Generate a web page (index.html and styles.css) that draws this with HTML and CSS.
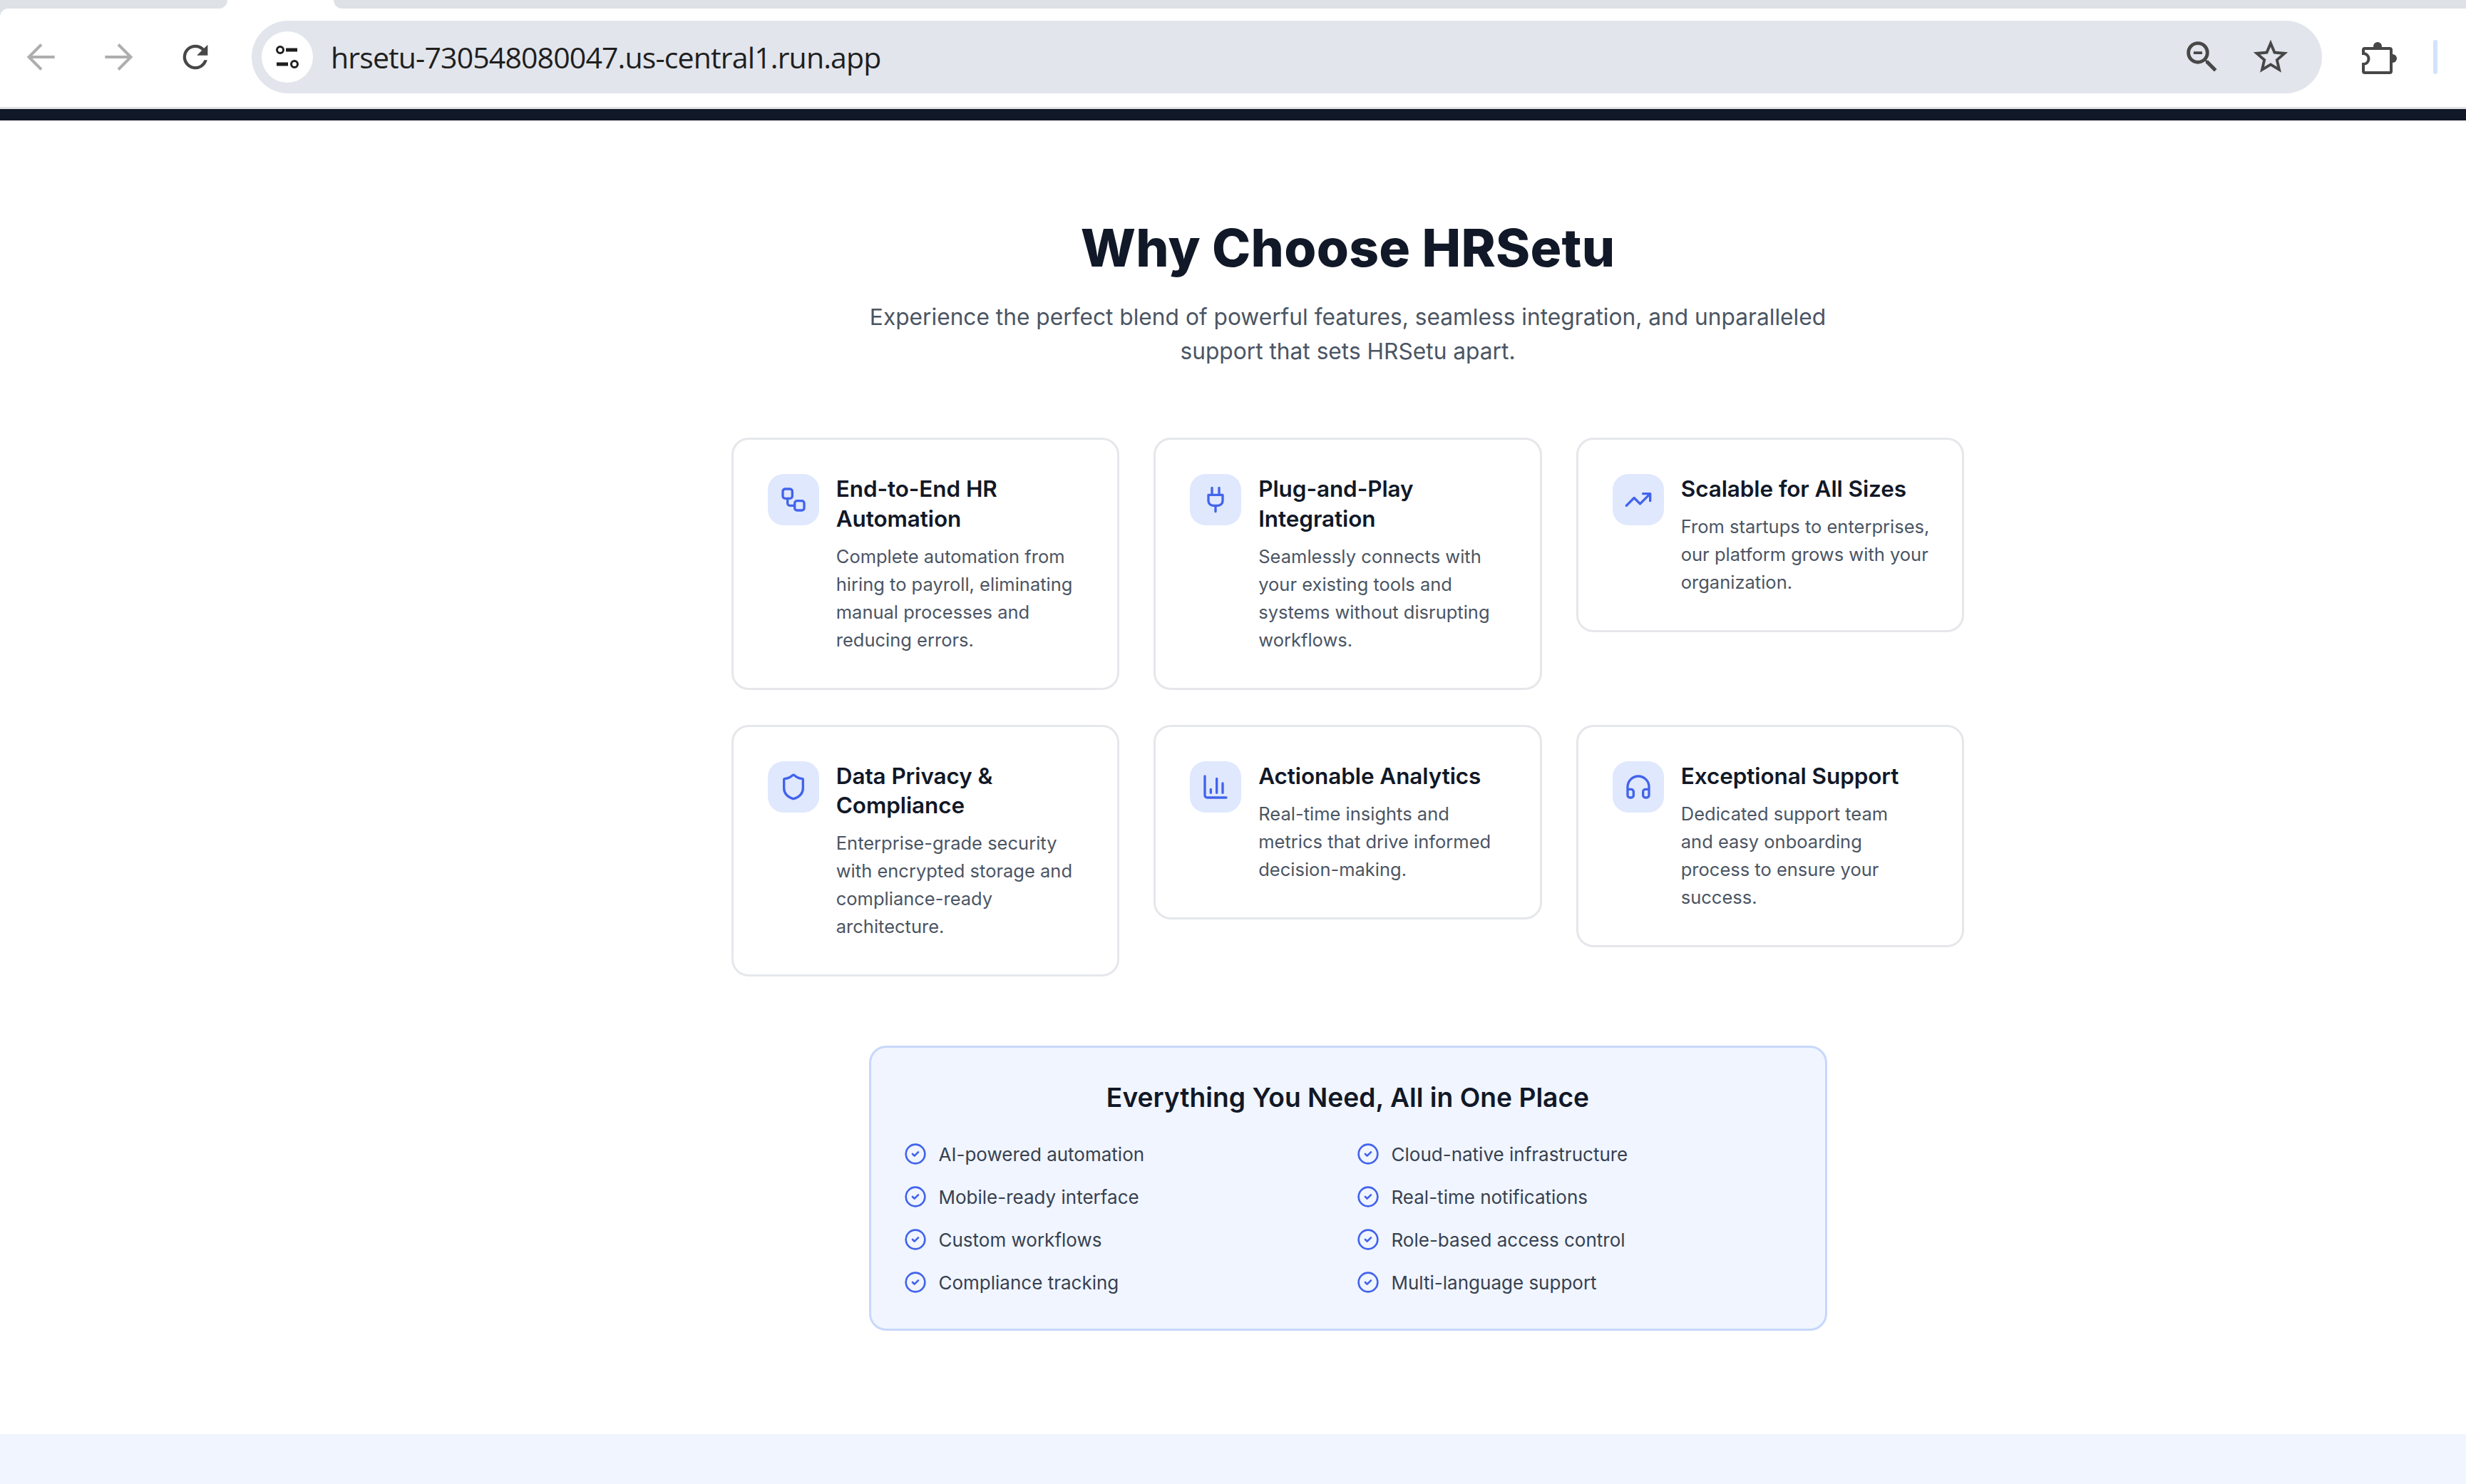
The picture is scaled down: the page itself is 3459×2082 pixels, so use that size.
FILE: index.html
```html
<!DOCTYPE html>
<html lang="en">
<head>
  <meta charset="UTF-8" />
  <meta name="viewport" content="width=device-width, initial-scale=1.0"/>
  <title>Why Choose HRSetu</title>
  <link rel="stylesheet" href="styles.css">
</head>
<body>

<!-- Browser chrome -->
<div class="tabs">
  <div class="tab-off"></div>
  <div class="tab-active"></div>
  <div class="tab-rest"></div>
</div>
<div class="toolbar">
  <svg class="nav-icon arrow" width="56" height="56" viewBox="0 0 24 24"><path d="M20 12H5M12 4.5 4.5 12l7.5 7.5"/></svg>
  <svg class="nav-icon arrow" width="56" height="56" viewBox="0 0 24 24"><path d="M4 12h15M12 4.5l7.5 7.5-7.5 7.5"/></svg>
  <svg class="nav-icon reload" width="52" height="52" viewBox="0 0 24 24"><path class="solid" d="M17.65 6.35A7.95 7.95 0 0 0 12 4a8 8 0 1 0 7.75 10h-2.08A6 6 0 1 1 12 6c1.66 0 3.14.69 4.22 1.78L13 11h7V4z"/></svg>
  <div class="omnibox">
    <div class="site-info">
      <svg width="40" height="40" viewBox="0 0 40 40"><circle class="ring" cx="10" cy="10" r="4.5"/><path class="bar" d="M18 10h16M5 30h16"/><circle class="ring" cx="30" cy="30" r="4.5"/></svg>
    </div>
    <div class="url">hrsetu-730548080047.us-central1.run.app</div>
    <div class="omni-actions">
      <svg width="58" height="58" viewBox="0 0 24 24"><path class="solid" d="M15.5 14h-.79l-.28-.27A6.471 6.471 0 0 0 16 9.5 6.5 6.5 0 1 0 9.5 16c1.61 0 3.09-.59 4.23-1.57l.27.28v.79l5 4.99L20.49 19l-4.99-5zm-6 0C7.01 14 5 11.99 5 9.5S7.01 5 9.5 5 14 7.01 14 9.5 11.99 14 9.5 14zM7 8.8h5v1.5H7z"/></svg>
      <svg width="58" height="58" viewBox="0 0 24 24"><path class="solid" d="M22 9.24l-7.19-.62L12 2 9.19 8.63 2 9.24l5.46 4.73L5.82 21 12 17.27 18.18 21l-1.63-7.03L22 9.24zM12 15.4l-3.76 2.27 1-4.28-3.32-2.88 4.38-.38L12 6.1l1.71 4.04 4.38.38-3.32 2.88 1 4.28L12 15.4z"/></svg>
    </div>
  </div>
  <svg class="puzzle" width="49" height="48" viewBox="0 0 49 48"><circle class="solid" cx="22" cy="9" r="6"/><circle class="solid" cx="43" cy="26" r="6"/><path class="puzzle-body" d="M4 12h35a2 2 0 0 1 2 2v30a2 2 0 0 1-2 2H4a2 2 0 0 1-2-2V34a7.5 7.5 0 0 0 0-15v-5a2 2 0 0 1 2-2z"/></svg>
  <div class="profile-bar"></div>
</div>
<div class="site-nav"></div>

<!-- Why choose section -->
<main class="why">
  <h1>Why Choose HRSetu</h1>
  <p class="lead">Experience the perfect blend of powerful features, seamless integration, and unparalleled<br>support that sets HRSetu apart.</p>

  <div class="feature-grid">
    <div class="card">
      <div class="card-icon"><svg width="40" height="40" viewBox="0 0 24 24"><rect x="3" y="3" width="8" height="8" rx="2"/><path d="M7 11v4a2 2 0 0 0 2 2h4"/><rect x="13" y="13" width="8" height="8" rx="2"/></svg></div>
      <div class="card-text">
        <h3>End-to-End HR<br>Automation</h3>
        <p>Complete automation from<br>hiring to payroll, eliminating<br>manual processes and<br>reducing errors.</p>
      </div>
    </div>
    <div class="card">
      <div class="card-icon"><svg width="40" height="40" viewBox="0 0 24 24"><path d="M12 22v-5M9 8V2M15 8V2M18 8v5a4 4 0 0 1-4 4h-4a4 4 0 0 1-4-4V8Z"/></svg></div>
      <div class="card-text">
        <h3>Plug-and-Play<br>Integration</h3>
        <p>Seamlessly connects with<br>your existing tools and<br>systems without disrupting<br>workflows.</p>
      </div>
    </div>
    <div class="card">
      <div class="card-icon"><svg width="40" height="40" viewBox="0 0 24 24"><path d="M22 7l-8.5 8.5-5-5L2 17M16 7h6v6"/></svg></div>
      <div class="card-text">
        <h3>Scalable for All Sizes</h3>
        <p>From startups to enterprises,<br>our platform grows with your<br>organization.</p>
      </div>
    </div>
    <div class="card">
      <div class="card-icon"><svg width="40" height="40" viewBox="0 0 24 24"><path d="M20 13c0 5-3.5 7.5-7.66 8.95a1 1 0 0 1-.67-.01C7.5 20.5 4 18 4 13V6a1 1 0 0 1 1-1c2 0 4.5-1.2 6.24-2.72a1.17 1.17 0 0 1 1.52 0C14.51 3.81 17 5 19 5a1 1 0 0 1 1 1z"/></svg></div>
      <div class="card-text">
        <h3>Data Privacy &amp;<br>Compliance</h3>
        <p>Enterprise-grade security<br>with encrypted storage and<br>compliance-ready<br>architecture.</p>
      </div>
    </div>
    <div class="card">
      <div class="card-icon"><svg width="40" height="40" viewBox="0 0 24 24"><path d="M3 3v16a2 2 0 0 0 2 2h16M18 17V9M13 17V5M8 17v-3"/></svg></div>
      <div class="card-text">
        <h3>Actionable Analytics</h3>
        <p>Real-time insights and<br>metrics that drive informed<br>decision-making.</p>
      </div>
    </div>
    <div class="card">
      <div class="card-icon"><svg width="40" height="40" viewBox="0 0 24 24"><path d="M3 14h3a2 2 0 0 1 2 2v3a2 2 0 0 1-2 2H5a2 2 0 0 1-2-2v-7a9 9 0 0 1 18 0v7a2 2 0 0 1-2 2h-1a2 2 0 0 1-2-2v-3a2 2 0 0 1 2-2h3"/></svg></div>
      <div class="card-text">
        <h3>Exceptional Support</h3>
        <p>Dedicated support team<br>and easy onboarding<br>process to ensure your<br>success.</p>
      </div>
    </div>
  </div>

  <div class="everything">
    <h2>Everything You Need, All in One Place</h2>
    <ul class="check-list">
      <li><svg width="32" height="32" viewBox="0 0 24 24"><circle cx="12" cy="12" r="10"/><path d="m9 12 2 2 4-4"/></svg>AI-powered automation</li>
      <li><svg width="32" height="32" viewBox="0 0 24 24"><circle cx="12" cy="12" r="10"/><path d="m9 12 2 2 4-4"/></svg>Cloud-native infrastructure</li>
      <li><svg width="32" height="32" viewBox="0 0 24 24"><circle cx="12" cy="12" r="10"/><path d="m9 12 2 2 4-4"/></svg>Mobile-ready interface</li>
      <li><svg width="32" height="32" viewBox="0 0 24 24"><circle cx="12" cy="12" r="10"/><path d="m9 12 2 2 4-4"/></svg>Real-time notifications</li>
      <li><svg width="32" height="32" viewBox="0 0 24 24"><circle cx="12" cy="12" r="10"/><path d="m9 12 2 2 4-4"/></svg>Custom workflows</li>
      <li><svg width="32" height="32" viewBox="0 0 24 24"><circle cx="12" cy="12" r="10"/><path d="m9 12 2 2 4-4"/></svg>Role-based access control</li>
      <li><svg width="32" height="32" viewBox="0 0 24 24"><circle cx="12" cy="12" r="10"/><path d="m9 12 2 2 4-4"/></svg>Compliance tracking</li>
      <li><svg width="32" height="32" viewBox="0 0 24 24"><circle cx="12" cy="12" r="10"/><path d="m9 12 2 2 4-4"/></svg>Multi-language support</li>
    </ul>
  </div>
</main>

<div class="next-section"></div>

</body>
</html>
```

FILE: styles.css
```css
* {
  box-sizing: border-box;
}

body {
  margin: 0;
  height: 2082px;
  overflow: hidden;
  background: white;
  font-family: Inter, "Liberation Sans", sans-serif;
  color: #111827;
}

/* Browser chrome */
.tabs {
  display: flex;
  height: 12px;
  background: white;
}

.tab-off {
  width: 319px;
  background: #dee1e6;
  border-bottom-right-radius: 14px;
}

.tab-active {
  width: 149px;
}

.tab-rest {
  flex: 1;
  background: #dee1e6;
  border-bottom-left-radius: 14px;
}

.toolbar {
  position: relative;
  display: flex;
  align-items: center;
  height: 141px;
  padding: 0 40px 3px 30px;
  background: white;
  border-bottom: 3px solid #e1e3e6;
}

.toolbar::before {
  content: "";
  position: absolute;
  left: 0;
  top: 0;
  width: 12px;
  height: 12px;
  background: radial-gradient(circle at 100% 100%, white 11.5px, #dee1e6 12.5px);
}

.nav-icon {
  flex: none;
  margin-right: 52px;
}

.nav-icon.reload {
  margin: 0 53px 0 2px;
}

.nav-icon path {
  fill: none;
  stroke: #474747;
  stroke-width: 1.7;
}

.nav-icon.arrow path {
  stroke: #aeaeae;
}

.nav-icon path.solid,
.omni-actions .solid,
.puzzle .solid {
  fill: #474747;
  stroke: none;
}

.omnibox {
  flex: 1;
  display: flex;
  align-items: center;
  height: 102px;
  padding: 0 43px 0 14px;
  background: #e2e5ec;
  border-radius: 51px;
}

.site-info {
  display: flex;
  align-items: center;
  justify-content: center;
  width: 72px;
  height: 72px;
  margin-right: 25px;
  background: white;
  border-radius: 50%;
}

.site-info .ring {
  fill: none;
  stroke: #1f1f1f;
  stroke-width: 3;
}

.site-info .bar {
  fill: none;
  stroke: #1f1f1f;
  stroke-width: 5;
}

.url {
  flex: 1;
  font-family: "Open Sans", sans-serif;
  font-size: 41px;
  letter-spacing: -0.85px;
  color: #1f1f1f;
}

.omni-actions {
  display: flex;
  gap: 38px;
}

.puzzle {
  flex: none;
  margin-left: 56px;
}

.puzzle-body {
  fill: white;
  stroke: #474747;
  stroke-width: 4;
}

.profile-bar {
  width: 6px;
  height: 48px;
  margin-left: 51px;
  background: #d3e3fd;
  border-radius: 3px;
}

.site-nav {
  height: 16px;
  background: #111827;
}

/* Why choose section */
.why {
  height: 1843px;
  padding: 139px 0 0 322px;
}

h1 {
  margin: 0;
  font-size: 73px;
  line-height: 80px;
  font-weight: 800;
  text-align: center;
  letter-spacing: 0.25px;
}

.lead {
  margin: 33px 0 0;
  font-size: 31.7px;
  line-height: 48px;
  text-align: center;
  color: #4b5563;
}

.feature-grid {
  display: grid;
  grid-template-columns: repeat(3, 544.5px);
  gap: 49px 48px;
  align-items: start;
  justify-content: center;
  margin-top: 97px;
}

.card {
  display: flex;
  gap: 24px;
  padding: 48px;
  background: white;
  border: 3px solid #e5e7eb;
  border-radius: 24px;
}

.card-icon {
  flex: none;
  display: flex;
  align-items: center;
  justify-content: center;
  width: 72px;
  height: 72px;
  background: #dfe8fd;
  border-radius: 22px;
}

.card-icon svg,
.check-list svg {
  flex: none;
  fill: none;
  stroke: #4263eb;
  stroke-width: 2;
  stroke-linecap: round;
  stroke-linejoin: round;
}

.card-text {
  white-space: nowrap;
}

.card h3 {
  margin: 0 0 12.4px;
  font-size: 31.5px;
  line-height: 41.6px;
  font-weight: 600;
  letter-spacing: -0.1px;
}

.card p {
  margin: 0;
  font-size: 25.5px;
  line-height: 39px;
  color: #4b5563;
}

.everything {
  width: 1344px;
  margin: 97px auto 0;
  padding: 42px 46px 45px;
  background: #f0f5ff;
  border: 3px solid #c7d8fb;
  border-radius: 24px;
}

.everything h2 {
  margin: 0 0 31px;
  font-size: 37.2px;
  line-height: 56px;
  font-weight: 600;
  text-align: center;
}

.check-list {
  display: grid;
  grid-template-columns: 1fr 1fr;
  column-gap: 24px;
  row-gap: 20px;
  margin: 0;
  padding: 0;
  list-style: none;
}

.check-list li {
  display: flex;
  align-items: center;
  gap: 17px;
  height: 40px;
  font-size: 26px;
  color: #374151;
}

.next-section {
  height: 70px;
  background: #f0f5ff;
}
```
